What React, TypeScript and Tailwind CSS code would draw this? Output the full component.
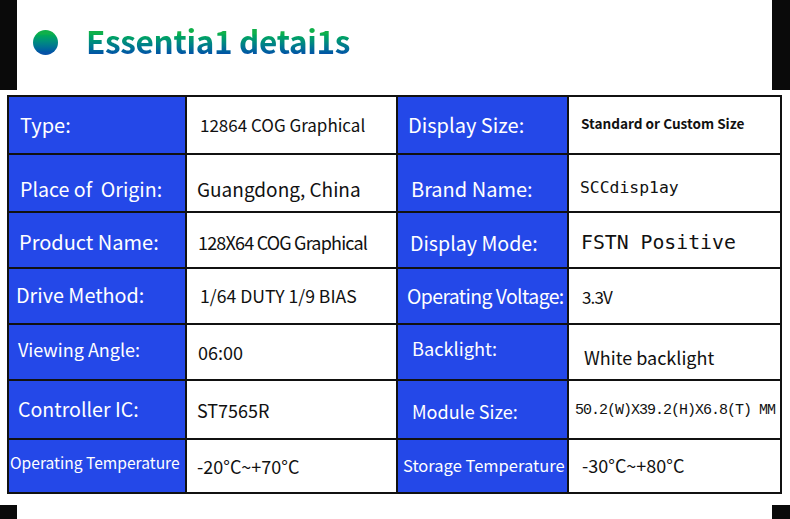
const sans = "font-['Noto_Sans_CJK_SC','Noto_Sans',sans-serif]";
const mono = "font-['DejaVu_Sans_Mono','Liberation_Mono',monospace]";
const courier = "font-['Liberation_Mono','Courier_New',monospace]";

type Cell = { text: string; cls: string };
type Row = { h: string; cells: [Cell, Cell, Cell, Cell] };

const rows: Row[] = [
  {
    h: "h-[56px]",
    cells: [
      { text: "Type:", cls: `${sans} text-[20px] pl-[11px] pb-[1px]` },
      { text: "12864 COG Graphical", cls: `${sans} text-[17px] pl-[13px] pb-[2px]` },
      { text: "Display Size:", cls: `${sans} text-[20px] pl-[10px] pb-[1px]` },
      { text: "Standard or Custom Size", cls: `${sans} text-[13.6px] font-bold pl-[12px] pb-[2px]` },
    ],
  },
  {
    h: "h-[56px]",
    cells: [
      { text: "Place of  Origin:", cls: `${sans} text-[19.6px] pl-[11px] pt-[11px] whitespace-pre` },
      { text: "Guangdong, China", cls: `${sans} text-[19px] pl-[10px] pt-[11px]` },
      { text: "Brand Name:", cls: `${sans} text-[20px] pl-[13px] pt-[12px]` },
      { text: "SCCdisp1ay", cls: `${mono} text-[16.4px] pl-[11px] pt-[10px]` },
    ],
  },
  {
    h: "h-[54px]",
    cells: [
      { text: "Product Name:", cls: `${sans} text-[20px] pl-[10px] pt-[3px]` },
      { text: "128X64 COG Graphical", cls: `${sans} text-[18px] pl-[11px] pt-[4px] tracking-[-0.045em]` },
      { text: "Display Mode:", cls: `${sans} text-[19.6px] pl-[12px] pt-[6px]` },
      { text: "FSTN Positive", cls: `${mono} text-[19.8px] pl-[12px] pt-[5px]` },
    ],
  },
  {
    h: "h-[54px]",
    cells: [
      { text: "Drive Method:", cls: `${sans} text-[19.8px] pl-[7px] pb-[2px]` },
      { text: "1/64 DUTY 1/9 BIAS", cls: `${sans} text-[17.6px] pl-[13px]` },
      { text: "Operating Voltage:", cls: `${sans} text-[19.4px] pl-[9px] tracking-[-0.03em]` },
      { text: "3.3V", cls: `${sans} text-[17px] pl-[13px] tracking-[-0.05em]` },
    ],
  },
  {
    h: "h-[54px]",
    cells: [
      { text: "Viewing Angle:", cls: `${sans} text-[18px] pl-[9px] pb-[7px]` },
      { text: "06:00", cls: `${sans} text-[18px] pl-[11px]` },
      { text: "Backlight:", cls: `${sans} text-[18.2px] pl-[14px] pb-[7px]` },
      { text: "White backlight", cls: `${sans} text-[18px] pl-[15px] pt-[9px]` },
    ],
  },
  {
    h: "h-[57px]",
    cells: [
      { text: "Controller IC:", cls: `${sans} text-[19.6px] pl-[9px] pb-[1px]` },
      { text: "ST7565R", cls: `${sans} text-[18px] pl-[10px]` },
      { text: "Module Size:", cls: `${sans} text-[18px] pl-[14px] pt-[2px]` },
      { text: "50.2(W)X39.2(H)X6.8(T) MM", cls: `${courier} text-[15px] tracking-[-1px] pl-[6px] pt-[2px]` },
    ],
  },
  {
    h: "h-[52px]",
    cells: [
      { text: "Operating Temperature", cls: `${sans} text-[15.6px] pl-[1px] pb-[6px]` },
      { text: "-20°C~+70°C", cls: `${sans} text-[18px] pl-[10px]` },
      { text: "Storage Temperature", cls: `${sans} text-[16.5px] pl-[5px] pb-[2px]` },
      { text: "-30°C~+80°C", cls: `${sans} text-[18px] pl-[13px] pb-[2px]` },
    ],
  },
];

const App = () => {
  return (
    <div className="w-[790px] h-[519px] bg-white flex flex-col overflow-hidden">
      {/* header strip */}
      <div className="flex h-[90px] shrink-0">
        <div className="w-[17px] bg-[#0a0a0a]" />
        <div className="flex-1 flex items-center pl-[16px] pb-[6px]">
          <div className="w-[25px] h-[25px] rounded-full bg-gradient-to-b from-[#10b04a] from-15% to-[#0652a6] to-90%" />
          <div
            className={`${sans} ml-[28px] pb-[3px] text-[31.5px] font-bold leading-none tracking-[-0.01em] bg-gradient-to-b from-[#10b04a] from-25% to-[#0652a6] to-85% bg-clip-text text-transparent`}
          >
            Essentia1 detai1s
          </div>
        </div>
        <div className="w-[18px] bg-[#0a0a0a]" />
      </div>

      {/* spec table */}
      <div className="ml-[7px] mt-[5px] w-[775px] bg-[#111] p-[2px] grid grid-cols-[176px_209px_169px_211px] gap-[2px]">
        {rows.map((row, ri) =>
          row.cells.map((c, ci) => {
            const label = ci % 2 === 0;
            return (
              <div
                key={`${ri}-${ci}`}
                className={`${row.h} flex items-center whitespace-nowrap leading-none ${
                  label ? "bg-[#2448e8] text-white" : "bg-white text-[#111]"
                } ${c.cls}`}
              >
                {c.text}
              </div>
            );
          })
        )}
      </div>

      <div className="flex-1" />
      <div className="flex justify-between h-[14px] shrink-0">
        <div className="w-[17px] bg-[#0a0a0a]" />
        <div className="w-[18px] bg-[#0a0a0a]" />
      </div>
    </div>
  );
};

export default App;
